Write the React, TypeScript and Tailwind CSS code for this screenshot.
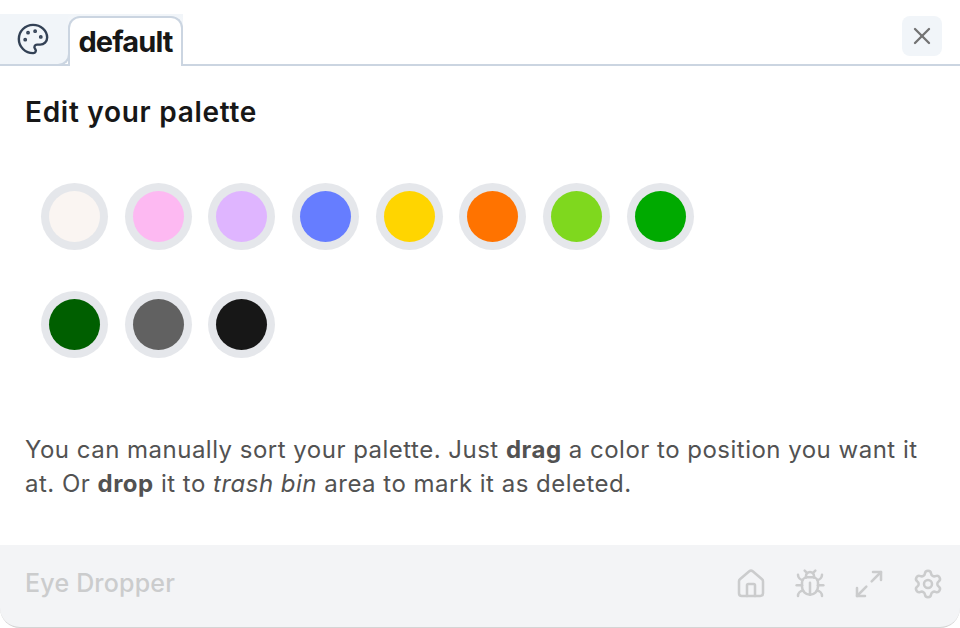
import { Bug, House, Maximize2, Palette, Settings, X } from "lucide-react"

const row1 = ["#faf5f2", "#fdb9f2", "#dfb5ff", "#667dff", "#ffd500", "#ff7300", "#7fd81e", "#00aa00"]
const row2 = ["#005f00", "#616161", "#171717"]

function Swatch({ color }: { color: string }) {
  return (
    <div className="w-[67px] h-[67px] rounded-full bg-[#e5e7eb] flex items-center justify-center">
      <div className="w-[51px] h-[51px] rounded-full" style={{ backgroundColor: color }} />
    </div>
  )
}

export default function App() {
  return (
    <div className="w-[960px] h-[628px] bg-white flex flex-col overflow-hidden font-['Inter',sans-serif]">
      {/* Tabs */}
      <div className="h-[66px] pt-[14px] flex items-stretch border-b-2 border-[#cbd5e1] pr-[18px]">
        <div className="w-[70px] -mb-[2px] bg-[#f1f5f9] border-b-2 border-r-2 border-[#cbd5e1] rounded-br-xl flex items-center justify-center pr-[2px]">
          <Palette size={34} strokeWidth={1.7} className="text-[#334155]" />
        </div>
        <div className="w-[115px] -ml-[2px] -mb-[2px] pt-[2px] bg-gradient-to-b from-[#f1f5f9] to-white">
          <div className="h-full bg-white border-2 border-b-0 border-[#cbd5e1] rounded-t-xl flex items-center justify-center text-[29px] font-bold tracking-[-0.9px] text-[#171717]">
            default
          </div>
        </div>
        <div className="ml-auto self-start mt-[2px] w-[40px] h-[40px] rounded-lg bg-[#f1f5f9] flex items-center justify-center">
          <X size={28} strokeWidth={2} className="text-[#737373]" />
        </div>
      </div>

      {/* Content */}
      <div className="flex-1 px-[25px]">
        <h1 className="mt-[29px] text-[28px] leading-[34px] font-semibold tracking-[0.72px] text-[#171717]">
          Edit your palette
        </h1>

        <div className="mt-[54px] pl-[16px] flex flex-col gap-[41px]">
          <div className="flex gap-[16.7px]">
            {row1.map((c) => (
              <Swatch key={c} color={c} />
            ))}
          </div>
          <div className="flex gap-[16.7px]">
            {row2.map((c) => (
              <Swatch key={c} color={c} />
            ))}
          </div>
        </div>

        <p className="mt-[75px] w-[900px] text-[24px] leading-[34px] text-[#525252] tracking-[0.49px]">
          You can manually sort your palette. Just <b>drag</b> a color to position you want it at. Or <b>drop</b> it to{" "}
          <i>trash bin</i> area to mark it as deleted.
        </p>
      </div>

      {/* Footer */}
      <div className="h-[83px] pb-[4px] bg-[#f3f4f6] rounded-b-[20px] border-b border-[#d4d4d4] pl-[25px] pr-[16px] flex items-center justify-between text-[#cbcccd]">
        <span className="text-[25px] font-medium tracking-[0.2px]">Eye Dropper</span>
        <div className="flex items-center gap-[27px]">
          <House size={32} strokeWidth={1.9} />
          <Bug size={32} strokeWidth={1.9} />
          <Maximize2 size={32} strokeWidth={1.9} />
          <Settings size={32} strokeWidth={1.9} />
        </div>
      </div>
    </div>
  )
}
